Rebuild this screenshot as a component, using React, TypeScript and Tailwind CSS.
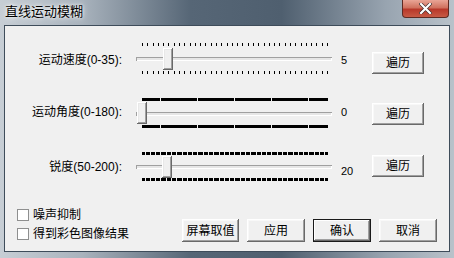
import React from 'react';

const font = { fontFamily: '"Liberation Sans", "Noto Sans CJK SC", sans-serif' };

function Btn({ label, def = false, className = '' }: { label: string; def?: boolean; className?: string }) {
  return (
    <div
      className={
        'flex items-center justify-center bg-[#f0f0f0] text-[12px] text-black ' +
        (def
          ? 'border border-[#1a1a1a] shadow-[inset_-1px_-1px_#696969,inset_1px_1px_#fff,inset_-2px_-2px_#a0a0a0] '
          : 'shadow-[inset_-1px_-1px_#696969,inset_1px_1px_#fff,inset_-2px_-2px_#a0a0a0,inset_2px_2px_#f8f8f8] ') +
        className
      }
    >
      {label}
    </div>
  );
}

function Ticks({ n, top }: { n: number; top: number }) {
  const rects = [];
  for (let i = 0; i < n; i++) {
    const x = Math.round(6 + (i * 185) / (n - 1));
    rects.push(<rect key={i} x={x} y={0} width={1} height={3} fill="#000" />);
  }
  return (
    <svg
      width={196}
      height={3}
      className="absolute left-0"
      style={{ top }}
      shapeRendering="crispEdges"
    >
      {rects}
    </svg>
  );
}

function Slider({
  n,
  value,
  trackY,
  thumbY,
  bottomY,
}: {
  n: number;
  value: number;
  trackY: number;
  thumbY: number;
  bottomY: number;
}) {
  const cx = Math.round(6 + (value * 185) / (n - 1));
  return (
    <div className="relative w-[196px] h-[32px]">
      <Ticks n={n} top={0} />
      <div
        className="absolute left-0 w-[196px] h-[4px] bg-[#e6e6e6] shadow-[inset_1px_1px_#a0a0a0,inset_-1px_-1px_#fff]"
        style={{ top: trackY }}
      />
      <div
        className="absolute w-[10px] h-[22px] bg-[#f0f0f0] shadow-[inset_-1px_-1px_#696969,inset_1px_1px_#fff,inset_-2px_-2px_#a0a0a0,inset_2px_2px_#e8e8e8]"
        style={{ top: thumbY, left: cx - 5 }}
      />
      <Ticks n={n} top={bottomY} />
    </div>
  );
}

function Row({
  label,
  labelMt,
  n,
  value,
  shown,
  valueMt,
  btnMt,
  trackY,
  thumbY,
  bottomY,
  className,
}: {
  label: string;
  labelMt: string;
  n: number;
  value: number;
  shown: string;
  valueMt: string;
  btnMt: string;
  trackY: number;
  thumbY: number;
  bottomY: number;
  className: string;
}) {
  return (
    <div className={'flex items-start h-[32px] ' + className}>
      <div className={'w-[117px] text-right text-[12px] leading-[14px] text-black ' + labelMt}>{label}</div>
      <div className="ml-[14px]">
        <Slider n={n} value={value} trackY={trackY} thumbY={thumbY} bottomY={bottomY} />
      </div>
      <div className={'ml-[9px] w-[31px] text-[11px] leading-[12px] text-black ' + valueMt}>{shown}</div>
      <Btn label="遍历" className={'w-[52px] h-[22px] ' + btnMt} />
    </div>
  );
}

function Check({ label, className = '' }: { label: string; className?: string }) {
  return (
    <div className={'flex items-center h-[13px] ' + className}>
      <div className="w-[12px] h-[12px] bg-white border border-[#8e8f8f]" />
      <span className="ml-[4px] text-[12px] leading-[14px] text-black">{label}</span>
    </div>
  );
}

export default function App() {
  return (
    <div
      className="w-[454px] h-[258px] flex flex-col bg-[linear-gradient(to_right,#c7ced5_0%,#a9b3bd_18%,#566676_42%,#4f5f6f_62%,#98a4b0_85%,#b9c2ca_100%)]"
      style={font}
    >
      <div className="h-[25px] flex items-start justify-between">
        <span className="ml-[5px] mt-[4px] text-[13px] leading-[16px] text-black [text-shadow:0_0_6px_#fff,0_0_3px_#fff]">
          直线运动模糊
        </span>
        <div className="mr-[5px] w-[47px] h-[18px] rounded-b-[4px] border border-t-0 border-[#5e2a22] bg-[linear-gradient(to_bottom,#e9a596_0%,#d0725f_45%,#b8382a_55%,#c75a44_100%)] flex items-center justify-center">
          <svg width="13" height="11" viewBox="0 0 13 11">
            <path d="M2 1 L11 10 M11 1 L2 10" stroke="#3a2a2a" strokeWidth="3.4" strokeLinecap="square" />
            <path d="M2 1 L11 10 M11 1 L2 10" stroke="#fff" strokeWidth="2.2" strokeLinecap="square" />
          </svg>
        </div>
      </div>
      <div className="mx-[4px] h-[227px] border border-[#3e4c5a] bg-[#f0f0f0] flex flex-col">
        <Row
          className="mt-[17px]"
          label="运动速度(0-35):"
          labelMt="mt-[10px]"
          n={36}
          value={5}
          shown="5"
          valueMt="mt-[11px]"
          btnMt="mt-[9px]"
          trackY={14}
          thumbY={5}
          bottomY={28}
        />
        <Row
          className="mt-[23px]"
          label="运动角度(0-180):"
          labelMt="mt-[7px]"
          n={181}
          value={0}
          shown="0"
          valueMt="mt-[8px]"
          btnMt="mt-[5px]"
          trackY={14}
          thumbY={4}
          bottomY={27}
        />
        <Row
          className="mt-[22px]"
          label="锐度(50-200):"
          labelMt="mt-[8px]"
          n={151}
          value={20}
          shown="20"
          valueMt="mt-[13px]"
          btnMt="mt-[3px]"
          trackY={13}
          thumbY={4}
          bottomY={26}
        />
        <div className="mt-[24px] flex items-start">
          <div className="w-[177px] pl-[12px] flex flex-col">
            <Check label="噪声抑制" />
            <Check label="得到彩色图像结果" className="mt-[6px]" />
          </div>
          <div className="mt-[11px] flex gap-[8px]">
            <Btn label="屏幕取值" className="w-[57px] h-[23px]" />
            <Btn label="应用" className="w-[58px] h-[23px]" />
            <Btn label="确认" def className="w-[58px] h-[23px]" />
            <Btn label="取消" className="w-[58px] h-[23px]" />
          </div>
        </div>
      </div>
    </div>
  );
}
